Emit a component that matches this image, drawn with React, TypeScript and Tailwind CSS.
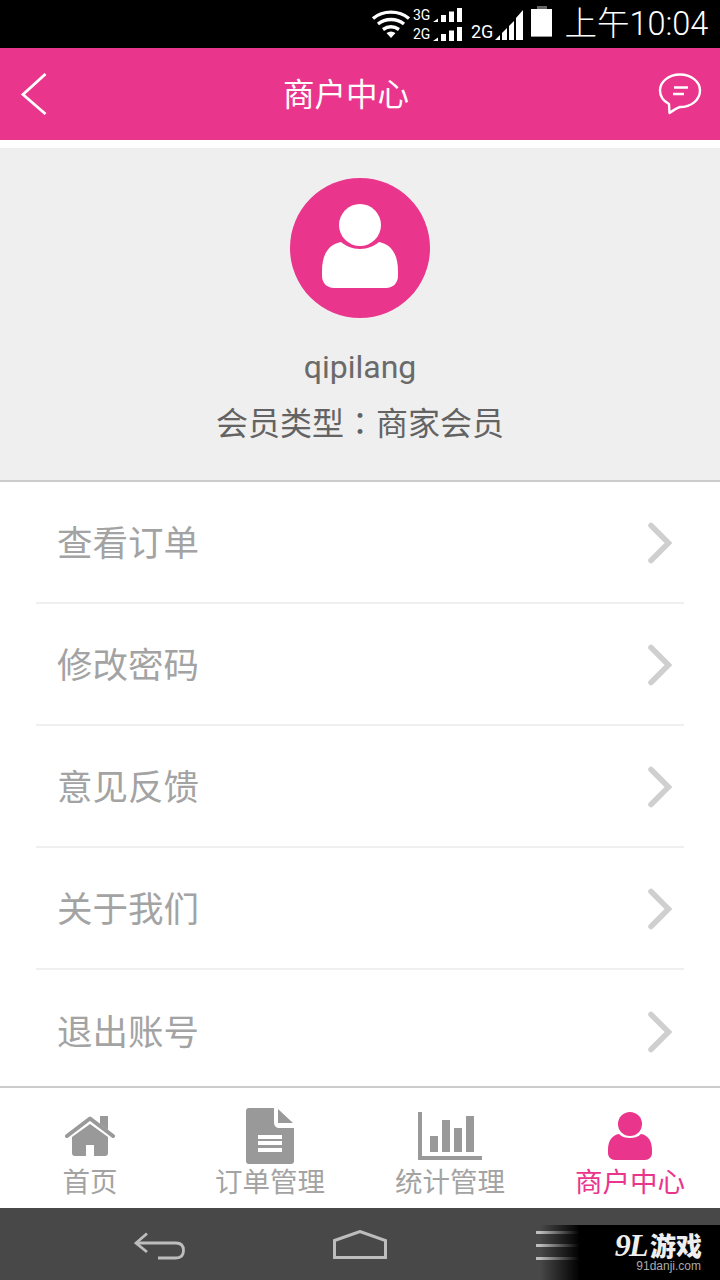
const CJK = "font-['Roboto','Noto_Sans_CJK_SC',sans-serif]";

const MENU = ["查看订单", "修改密码", "意见反馈", "关于我们", "退出账号"];

function Bars() {
  return (
    <svg width="29" height="14" viewBox="0 0 29 14" fill="#fff">
      <path d="M0 14L5 10.500V14Z" />
      <rect x="8" y="7" width="5" height="7" />
      <rect x="16" y="3.500" width="5" height="10.500" />
      <rect x="24" y="0" width="5" height="14" />
    </svg>
  );
}

function StatusBar() {
  return (
    <div className="flex h-12 items-center bg-black pl-[371px] text-white">
      <svg width="40" height="30" viewBox="0 0 40 30" className="mt-[1px]" fill="none" stroke="#fff" strokeWidth="3.400">
        <path d="M2 8.500C12 0 28 0 38 8.500" />
        <path d="M7 14C14.500 8 25.500 8 33 14" />
        <path d="M12 19.500C17 16 23 16 28 19.500" />
        <path d="M15.500 23L20 28L24.500 23C21.500 21 18.500 21 15.500 23Z" fill="#fff" stroke="none" />
      </svg>
      <div className="ml-[2px] flex w-[49px] flex-col gap-[1px]">
        <div className="flex h-[18px] items-center justify-between">
          <span className="font-['Roboto',sans-serif] text-[14px] leading-none">3G</span>
          <Bars />
        </div>
        <div className="flex h-[18px] items-center justify-between">
          <span className="font-['Roboto',sans-serif] text-[14px] leading-none">2G</span>
          <Bars />
        </div>
      </div>
      <span className="mt-[15px] ml-[9px] font-['Roboto',sans-serif] text-[18px] leading-none">2G</span>
      <svg width="30" height="31" viewBox="0 0 30 31" className="mt-[1px] ml-[1px]" fill="#fff">
        <path d="M1 31L6 26V31Z" />
        <path d="M8 24L13 19V31H8Z" />
        <path d="M15 17L20 12V31H15Z" />
        <path d="M22 9L29 1V31H22Z" />
      </svg>
      <div className="mt-[-5px] ml-[7px] flex flex-col items-center">
        <div className="h-[3px] w-[10px] bg-[#666]" />
        <div className="h-[28px] w-[21px] border-b border-[#999] bg-white" />
      </div>
      <span className={`ml-[12px] text-[32.500px] leading-none font-light ${CJK}`}>上午10:04</span>
    </div>
  );
}

function Header() {
  return (
    <div className="relative flex h-[92px] items-center justify-between bg-[#e9358b] pr-[18px] pl-[20px]">
      <svg width="28" height="42" viewBox="0 0 28 42" fill="none" stroke="#fff" strokeWidth="2.800">
        <path d="M25.500 1L3 21.500L25.500 41" />
      </svg>
      <span className={`absolute left-[283px] mt-[4px] text-[31.500px] leading-none text-white ${CJK}`}>商户中心</span>
      <svg width="44" height="44" viewBox="0 0 44 44" fill="none" stroke="#fff" strokeWidth="2.400">
        <path d="M22 2.500C11 2.500 2 9.500 2 18.500C2 24.500 5.500 29 11 32L11.500 41C15 38.500 19 36 22 35C33 35 42 28 42 18.500C42 9.500 33 2.500 22 2.500Z" strokeLinejoin="round" />
        <path d="M16 15.500H30M15 22H26" strokeWidth="2.600" />
      </svg>
    </div>
  );
}

function Profile() {
  return (
    <div className="mt-2 flex h-[334px] flex-col items-center border-b-2 border-[#cccccc] bg-[#efefef] pt-[30px]">
      <div className="flex h-[140px] w-[140px] items-center justify-center rounded-full bg-[#e9358b]">
        <svg width="76" height="84" viewBox="0 0 76 84" fill="#fff" className="mb-[5px]">
          <circle cx="38" cy="21" r="21" />
          <path d="M19 38C24 42 30 45 38 45C46 45 52 42 57 38C69 40 76 50 76 67V72C76 79 71 84 64 84H12C5 84 0 79 0 72V67C0 50 7 40 19 38Z" />
        </svg>
      </div>
      <span className="mt-[30px] font-['Roboto',sans-serif] text-[32px] leading-[38px] text-[#6a6a6a]">qipilang</span>
      <span className="mt-[16px] font-['Noto_Sans_CJK_SC',sans-serif] text-[32px] leading-[38px] text-[#636363]">
        会员类型<span className="font-['Noto_Sans_CJK_TC',sans-serif]">：</span>商家会员
      </span>
    </div>
  );
}

function MenuList() {
  return (
    <div className="flex h-[604px] flex-col bg-white px-9">
      {MENU.map((label, i) => (
        <div
          key={label}
          className={`flex h-[122px] shrink-0 items-center justify-between pr-[10px] pl-[21px] ${
            i < MENU.length - 1 ? "border-b-2 border-[#efefef]" : ""
          }`}
        >
          <span className="mb-[2px] font-['Noto_Sans_CJK_SC',sans-serif] text-[35.500px] leading-none text-[#a3a3a3]">
            {label}
          </span>
          <svg width="26" height="42" viewBox="0 0 26 42" fill="none" stroke="#cfcfcf" strokeWidth="5.500" strokeLinecap="round" className="mt-[1px]">
            <path d="M3 3.500L20.500 21L3 38.500" />
          </svg>
        </div>
      ))}
    </div>
  );
}

function TabItem({ label, active, children }: { label: string; active?: boolean; children: React.ReactNode }) {
  return (
    <div className="flex flex-1 flex-col items-center">
      <div className="flex h-[60px] items-end">{children}</div>
      <span
        className={`mt-[5px] font-['Noto_Sans_CJK_SC',sans-serif] text-[27.500px] leading-[30px] ${
          active ? "text-[#e9358b]" : "text-[#a3a3a3]"
        }`}
      >
        {label}
      </span>
    </div>
  );
}

function TabBar() {
  return (
    <div className="flex h-[122px] border-t-2 border-[#cccccc] bg-white pt-[12px]">
      <TabItem label="首页">
        <svg width="52" height="40" viewBox="0 0 52 40" fill="#999999" className="mb-[4px]">
          <path d="M36 0H44V14L36 8Z" />
          <path d="M3 20L26 2.500L49 20" fill="none" stroke="#999999" strokeWidth="4" strokeLinecap="round" strokeLinejoin="round" />
          <path d="M26 8L44 21V37Q44 40 41 40H30V29H22V40H11Q8 40 8 37V21Z" />
        </svg>
      </TabItem>
      <TabItem label="订单管理">
        <svg width="48" height="56" viewBox="0 0 48 56" fill="#999999" className="mb-[-4px]">
          <path d="M3 0H28V14C28 18 30 20 34 20H48V53C48 55 47 56 45 56H3C1 56 0 55 0 53V3C0 1 1 0 3 0Z" />
          <path d="M32 1L47 15H32Z" />
          <rect x="12" y="27" width="24" height="4" fill="#fff" />
          <rect x="12" y="33" width="24" height="4" fill="#fff" />
          <rect x="12" y="40" width="24" height="4" fill="#fff" />
        </svg>
      </TabItem>
      <TabItem label="统计管理">
        <svg width="64" height="48" viewBox="0 0 64 48" fill="#999999">
          <path d="M0 0H4V44H64V48H0Z" />
          <rect x="12" y="24" width="8" height="16" />
          <rect x="24" y="8" width="8" height="32" />
          <rect x="36" y="16" width="8" height="24" />
          <rect x="48" y="4" width="8" height="36" />
        </svg>
      </TabItem>
      <TabItem label="商户中心" active>
        <svg width="44" height="48" viewBox="0 0 44 48" fill="#e9358b">
          <circle cx="22" cy="12" r="12" />
          <path d="M11 22C14 25 18 26 22 26C26 26 30 25 33 22C40 23 44 29 44 38V41C44 45 41 48 37 48H7C3 48 0 45 0 41V38C0 29 4 23 11 22Z" />
        </svg>
      </TabItem>
    </div>
  );
}

function NavBar() {
  return (
    <div className="relative flex h-[72px] bg-[#484848] pl-[60px]">
      <div className="flex w-[200px] justify-center pt-[24px]">
        <svg width="52" height="28" viewBox="0 0 52 28" fill="none" stroke="#bdbdbd" strokeWidth="2.800">
          <path d="M13 1.500L2 11L13 20" />
          <path d="M2 11H42C47 11 49.500 14 49.500 18.500C49.500 23 47 26 42 26H24" />
        </svg>
      </div>
      <div className="flex w-[200px] justify-center pt-[22px]">
        <svg width="54" height="30" viewBox="0 0 54 30" fill="none" stroke="#bdbdbd" strokeWidth="3">
          <path d="M1.500 10.500L27 1.500L52.500 10.500V27.500H1.500Z" />
        </svg>
      </div>
      <div className="flex w-[200px] flex-col gap-[10px] pt-[23px] pl-[76px]">
        <div className="h-[3px] w-[50px] bg-[#bdbdbd]" />
        <div className="h-[3px] w-[50px] bg-[#bdbdbd]" />
        <div className="h-[3px] w-[50px] bg-[#bdbdbd]" />
      </div>
      {/* site watermark sits on top of the nav bar */}
      <div className="absolute right-0 bottom-0 h-[55px] w-[180px] bg-[linear-gradient(90deg,rgba(0,0,0,0)_0%,#000_22%)]">
        <div className="absolute top-[6px] right-[18px] flex h-[28px] items-center">
          <span className="font-['Liberation_Serif',serif] text-[32px] leading-[28px] font-bold tracking-tighter text-[#eeeeee] italic">
            9L
          </span>
          <span className="ml-[3px] font-['Noto_Sans_CJK_SC',sans-serif] text-[26px] leading-[28px] font-black text-[#eeeeee]">
            游戏
          </span>
        </div>
        <span className="absolute top-[35px] right-[19px] font-['Liberation_Sans',sans-serif] text-[12px] leading-none text-[#aaaaaa]">
          91danji.com
        </span>
      </div>
    </div>
  );
}

export default function App() {
  return (
    <div className="flex h-[1280px] w-[720px] flex-col overflow-hidden bg-white">
      <StatusBar />
      <Header />
      <Profile />
      <MenuList />
      <TabBar />
      <NavBar />
    </div>
  );
}
